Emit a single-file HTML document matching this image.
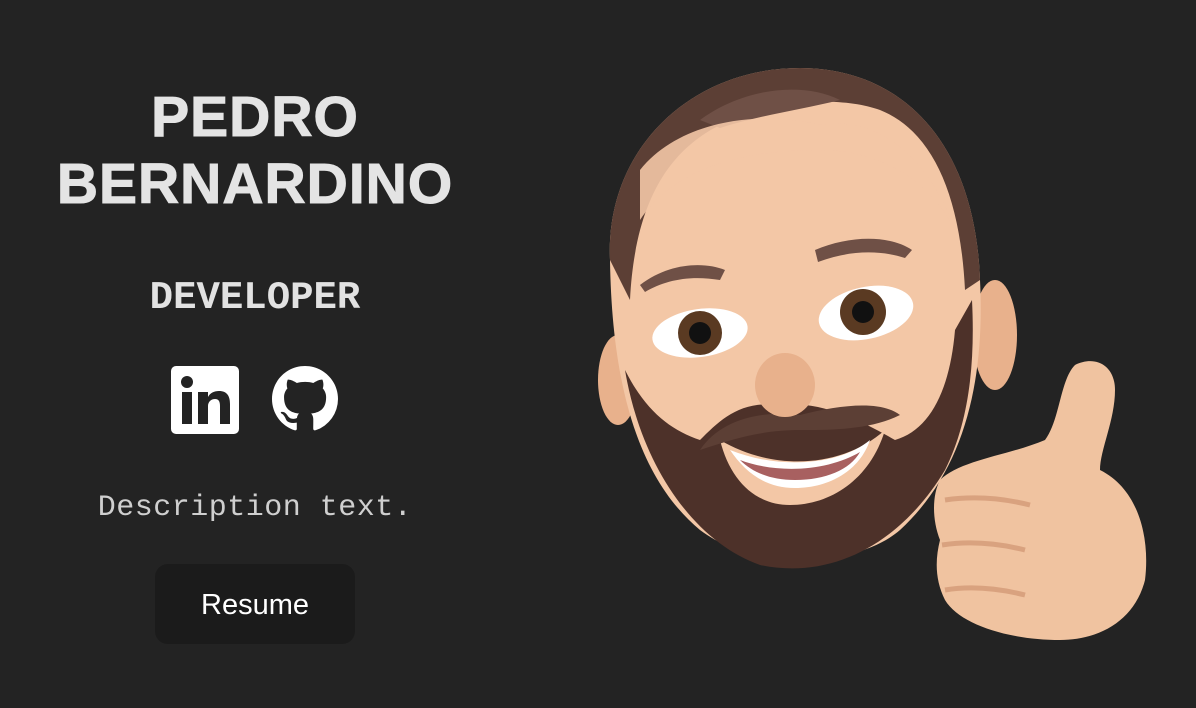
<!DOCTYPE html>
<html><head><meta charset="utf-8"><style>
html,body{margin:0;padding:0;width:1196px;height:708px;background:#232323;overflow:hidden}
.t{position:absolute;left:0;width:510px;text-align:center;color:#e4e4e4}
.name{top:84px;font:bold 57px/67px "Liberation Sans",sans-serif;letter-spacing:1px;-webkit-text-stroke:1px #e4e4e4}
.role{top:276px;font:bold 39px/44px "Liberation Mono",monospace;color:#e2e2e2}
.desc{top:488px;font:30px/40px "Liberation Mono",monospace;color:#cfcfcf;letter-spacing:0.5px}
.btn{position:absolute;left:155px;top:564px;width:200px;height:80px;background:#1b1b1b;border-radius:13px;color:#fff;font:29px/82px "Liberation Sans",sans-serif;text-align:center}
</style></head><body>
<div class="t name">PEDRO<br>BERNARDINO</div>
<div class="t role">DEVELOPER</div>
<svg style="position:absolute;left:171px;top:366px" width="68" height="68" viewBox="0 0 68 68">
<rect width="68" height="68" rx="5" fill="#fff"/>
<rect x="11" y="26" width="10" height="32" fill="#232323"/>
<circle cx="16" cy="16" r="6" fill="#232323"/>
<path d="M27 26h10v5c2-4 6-6 11-6 8 0 11 5 11 13v20H49V40c0-4-1-7-5-7s-7 3-7 7v18H27z" fill="#232323"/>
</svg>
<svg style="position:absolute;left:272px;top:366px" width="66" height="66" viewBox="0 0 16 16">
<path fill="#fff" d="M8 0C3.580 0 0 3.58 0 8c0 3.54 2.29 6.53 5.47 7.590.4.07.55-.17.55-.38 0-.19-.01-.82-.01-1.49-2.010.37-2.530-.49-2.690-.94-.09-.23-.48-.94-.82-1.13-.28-.15-.68-.52-.01-.53.63-.01 1.08.58 1.23.82.72 1.21 1.87.87 2.33.66.07-.52.28-.87.51-1.07-1.78-.2-3.64-.89-3.64-3.95 0-.87.31-1.59.82-2.15-.08-.2-.36-1.02.08-2.12 0 0 .67-.21 2.2.82.64-.18 1.32-.27 2-.27.68 0 1.36.09 2 .27 1.53-1.04 2.2-.82 2.2-.82.44 1.1.16 1.92.08 2.12.51.56.82 1.27.82 2.15 0 3.07-1.87 3.75-3.65 3.95.29.25.54.73.54 1.48 0 1.07-.01 1.93-.01 2.2 0 .21.15.46.55.38A8.013 8.013 0 0016 8c0-4.42-3.58-8-8-8z"/>
</svg>
<div class="t desc">Description text.</div>
<div class="btn">Resume</div>
<svg style="position:absolute;left:590px;top:60px" width="580" height="600" viewBox="590 60 580 600">
<ellipse cx="618" cy="380" rx="20" ry="45" fill="#e8b18c"/>
<ellipse cx="995" cy="335" rx="22" ry="55" fill="#e8b18c"/>
<path d="M610 260C605 150 690 68 800 68C900 68 975 140 980 280C985 380 965 470 900 530C860 565 760 575 700 530C640 480 612 390 610 260Z" fill="#f3c7a6"/>
<path d="M610 260C605 150 690 68 800 68C900 68 975 140 980 280L965 290C960 190 930 130 880 110C840 95 760 100 720 125C670 150 635 200 630 300Z" fill="#5c3f35"/>
<path d="M700 120C740 90 800 80 840 100C800 110 760 115 720 128Z" fill="#6f5046"/>
<path d="M640 170C680 120 760 110 820 125C880 115 930 160 955 230C930 180 880 150 820 150C760 150 680 160 640 220Z" fill="#f3c7a6" opacity=".9"/>
<path d="M625 370C640 460 690 540 760 565C830 580 900 545 945 470C970 420 975 360 972 300L955 330C950 390 930 430 895 440C860 420 820 400 780 405C740 400 720 420 700 440C670 430 645 410 625 370Z" fill="#4d3129"/>
<path d="M720 440C770 470 840 470 885 430C870 480 830 505 790 505C755 505 730 480 720 440Z" fill="#f3c7a6"/>
<path d="M730 450C780 470 840 465 870 440C860 470 830 488 795 488C765 488 745 472 730 450Z" fill="#fff"/>
<path d="M740 460C780 475 830 470 860 452C850 470 825 480 795 480C770 480 752 472 740 460Z" fill="#a86060"/>
<path d="M700 450C720 420 760 410 800 415C840 405 880 400 900 415C870 430 830 430 800 430C760 430 730 440 700 450Z" fill="#5c3f35"/>
<ellipse cx="785" cy="385" rx="30" ry="32" fill="#e8b18c"/>
<ellipse cx="700" cy="333" rx="48" ry="24" fill="#fff" transform="rotate(-8 700 333)"/>
<ellipse cx="866" cy="313" rx="48" ry="26" fill="#fff" transform="rotate(-12 866 313)"/>
<circle cx="700" cy="333" r="22" fill="#5a3a22"/><circle cx="700" cy="333" r="11" fill="#111"/>
<circle cx="863" cy="312" r="23" fill="#5a3a22"/><circle cx="863" cy="312" r="11" fill="#111"/>
<path d="M640 285C670 262 705 262 725 270L720 280C690 275 665 280 645 292Z" fill="#6f5046"/>
<path d="M815 250C850 235 890 235 912 250L905 258C880 250 850 250 818 262Z" fill="#6f5046"/>
<path d="M940 480C960 460 1010 455 1045 440C1060 420 1060 380 1075 365C1095 355 1115 365 1115 390C1115 420 1100 450 1100 470C1140 490 1150 540 1145 580C1135 620 1100 640 1060 640C1010 640 960 625 945 600C935 580 935 560 940 540C932 520 932 495 940 480Z" fill="#f0c3a0"/>
<path d="M945 500C980 495 1010 500 1030 505M942 545C975 540 1005 545 1025 550M945 590C975 585 1005 590 1025 595" stroke="#d9a27f" stroke-width="5" fill="none"/>
</svg>
</body></html>
